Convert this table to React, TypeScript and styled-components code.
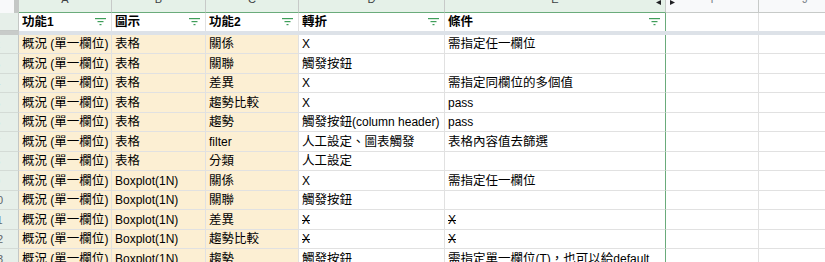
import React from 'react';
import styled, { createGlobalStyle } from 'styled-components';

const GlobalStyle = createGlobalStyle`
  body {
    margin: 0;
    background: #fff;
    overflow: hidden;
  }
`;

const COLS = '19px 93px 94px 93px 146px 221px 93px 93px';
const FONT = '"Liberation Sans", "Noto Sans CJK TC", sans-serif';
const GRID = '#e1e1e1';
const FILTER_GREEN = '#6aab7b';

const Sheet = styled.div`
  width: 825px;
  height: 262px;
  overflow: hidden;
  font-family: ${FONT};
  font-size: 12px;
  line-height: 14px;
  color: #1f1f1f;
`;

const Row = styled.div<{ $h: number }>`
  display: grid;
  grid-template-columns: ${COLS};
  grid-template-rows: ${p => p.$h}px;
  height: ${p => p.$h}px;
`;

const Corner = styled.div`
  background: #f8f9fa;
  border-right: 5px solid #c4c7c5;
  box-sizing: border-box;
`;

const ColHead = styled.div<{ $sel?: boolean }>`
  position: relative;
  display: flex;
  justify-content: center;
  align-items: center;
  overflow: hidden;
  box-sizing: border-box;
  background: ${p => (p.$sel ? '#e5f1e8' : '#f8f9fa')};
  border-right: 1px solid #c7cac8;
  border-bottom: 1px solid ${p => (p.$sel ? FILTER_GREEN : '#c7cac8')};
  font-size: 11px;
  color: ${p => (p.$sel ? '#3c4043' : '#80868b')};
`;

const ColLetter = styled.span`
  transform: translateY(-7px);
`;

const HiddenArrow = styled.svg<{ $side: 'left' | 'right' }>`
  position: absolute;
  top: 0;
  ${p => (p.$side === 'left' ? 'right: 4px;' : 'left: 4px;')}
`;

const RowHead = styled.div<{ $frozen?: boolean }>`
  display: flex;
  align-items: center;
  overflow: hidden;
  box-sizing: border-box;
  min-height: 0;
  background: #e6efe9;
  border-right: 1px solid #c4c7c5;
  border-bottom: 1px solid ${p => (p.$frozen ? '#c4c7c5' : '#d4dbd6')};
  font-size: 11px;
  color: #5f6368;
`;

// the row header is scrolled, so only the tail of two-digit numbers shows
const RowNum = styled.span`
  flex: none;
  width: 40px;
  margin-left: -23px;
  text-align: center;
`;

const FrozenBar = styled.div`
  display: grid;
  grid-template-columns: ${COLS};
  height: 4px;
  background: #dde2e8;
`;

const FrozenHead = styled.div`
  background: #c8cbc9;
`;

const HeadCell = styled.div<{ $edge?: boolean }>`
  display: flex;
  align-items: center;
  justify-content: space-between;
  min-height: 0;
  padding: 0 5px 0 3px;
  box-sizing: border-box;
  background: #fff;
  border-right: 1px solid ${p => (p.$edge ? FILTER_GREEN : GRID)};
  font-weight: 700;
  color: #000;
  overflow: hidden;
  white-space: nowrap;
`;

const Cell = styled.div<{ $tint?: boolean; $edge?: boolean; $strike?: boolean }>`
  display: flex;
  align-items: center;
  min-height: 0;
  padding: 0 3px;
  box-sizing: border-box;
  background: ${p => (p.$tint ? '#fcefd3' : '#fff')};
  border-right: 1px solid ${p => (p.$edge ? FILTER_GREEN : GRID)};
  border-bottom: 1px solid ${GRID};
  white-space: pre;
  overflow: hidden;
  text-decoration: ${p => (p.$strike ? 'line-through' : 'none')};
  color: #000;
`;

// the CJK glyphs in the sheet render a touch larger than the latin ones
const Han = styled.span`
  font-size: 12.5px;
`;

const withHan = (text: string) => (
  <span>
    {text.split(/([\u3000-\u9fff\uff00-\uffef]+)/).map((part, i) =>
      i % 2 === 1 ? <Han key={i}>{part}</Han> : part
    )}
  </span>
);

const FilterIcon = () => (
  <svg width="11" height="8" viewBox="0 0 11 8">
    <g stroke="#1e8e3e" strokeWidth="1.2" opacity="0.85">
      <line x1="0" y1="0.6" x2="11" y2="0.6" />
      <line x1="2.5" y1="3.6" x2="8.5" y2="3.6" />
      <line x1="4.5" y1="6.6" x2="6.5" y2="6.6" />
    </g>
  </svg>
);

type Entry = string | { t: string; s: true };

const rows: Entry[][] = [
  ['概況 (單一欄位)', '表格', '關係', 'X', '需指定任一欄位'],
  ['概況 (單一欄位)', '表格', '關聯', '觸發按鈕', ''],
  ['概況 (單一欄位)', '表格', '差異', 'X', '需指定同欄位的多個值'],
  ['概況 (單一欄位)', '表格', '趨勢比較', 'X', 'pass'],
  ['概況 (單一欄位)', '表格', '趨勢', '觸發按鈕(column header)', 'pass'],
  ['概況 (單一欄位)', '表格', 'filter', '人工設定、圖表觸發', '表格內容值去篩選'],
  ['概況 (單一欄位)', '表格', '分類', '人工設定', ''],
  ['概況 (單一欄位)', 'Boxplot(1N)', '關係', 'X', '需指定任一欄位'],
  ['概況 (單一欄位)', 'Boxplot(1N)', '關聯', '觸發按鈕', ''],
  ['概況 (單一欄位)', 'Boxplot(1N)', '差異', { t: 'X', s: true }, { t: 'X', s: true }],
  ['概況 (單一欄位)', 'Boxplot(1N)', '趨勢比較', { t: 'X', s: true }, { t: 'X', s: true }],
  ['概況 (單一欄位)', 'Boxplot(1N)', '趨勢', '觸發按鈕', '需指定單一欄位(T)，也可以給default'],
];

const headers = ['功能1', '圖示', '功能2', '轉折', '條件'];
const letters = ['A', 'B', 'C', 'D', 'E'];

const App: React.FC = () => {
  return (
    <Sheet>
      <GlobalStyle />
      {/* column letters, scrolled so only the lower half shows */}
      <Row $h={13}>
        <Corner />
        {letters.map((l, i) => (
          <ColHead key={l} $sel>
            <ColLetter>{l}</ColLetter>
            {i === 4 && (
              <HiddenArrow $side="left" width="5" height="5" viewBox="0 0 5 5">
                <polygon points="5,0 0,2.5 5,5" fill="#202124" />
              </HiddenArrow>
            )}
          </ColHead>
        ))}
        <ColHead>
          <ColLetter>I</ColLetter>
          <HiddenArrow $side="right" width="5" height="5" viewBox="0 0 5 5">
            <polygon points="0,0 5,2.5 0,5" fill="#202124" />
          </HiddenArrow>
        </ColHead>
        <ColHead>
          <ColLetter>J</ColLetter>
        </ColHead>
      </Row>

      {/* header row */}
      <Row $h={18}>
        <RowHead $frozen />
        {headers.map((h, i) => (
          <HeadCell key={h} $edge={i === 4}>
            {withHan(h)}
            <FilterIcon />
          </HeadCell>
        ))}
        <HeadCell />
        <HeadCell />
      </Row>

      <FrozenBar>
        <FrozenHead />
      </FrozenBar>

      {rows.map((r, ri) => (
        <Row key={ri} $h={ri % 2 === 0 ? 19 : 20}>
          <RowHead>
            <RowNum>{ri + 2}</RowNum>
          </RowHead>
          {r.map((c, ci) => {
            const text = typeof c === 'string' ? c : c.t;
            const strike = typeof c !== 'string';
            return (
              <Cell key={ci} $tint={ci < 3} $edge={ci === 4} $strike={strike}>
                {withHan(text)}
              </Cell>
            );
          })}
          <Cell />
          <Cell />
        </Row>
      ))}
    </Sheet>
  );
};

export default App;
